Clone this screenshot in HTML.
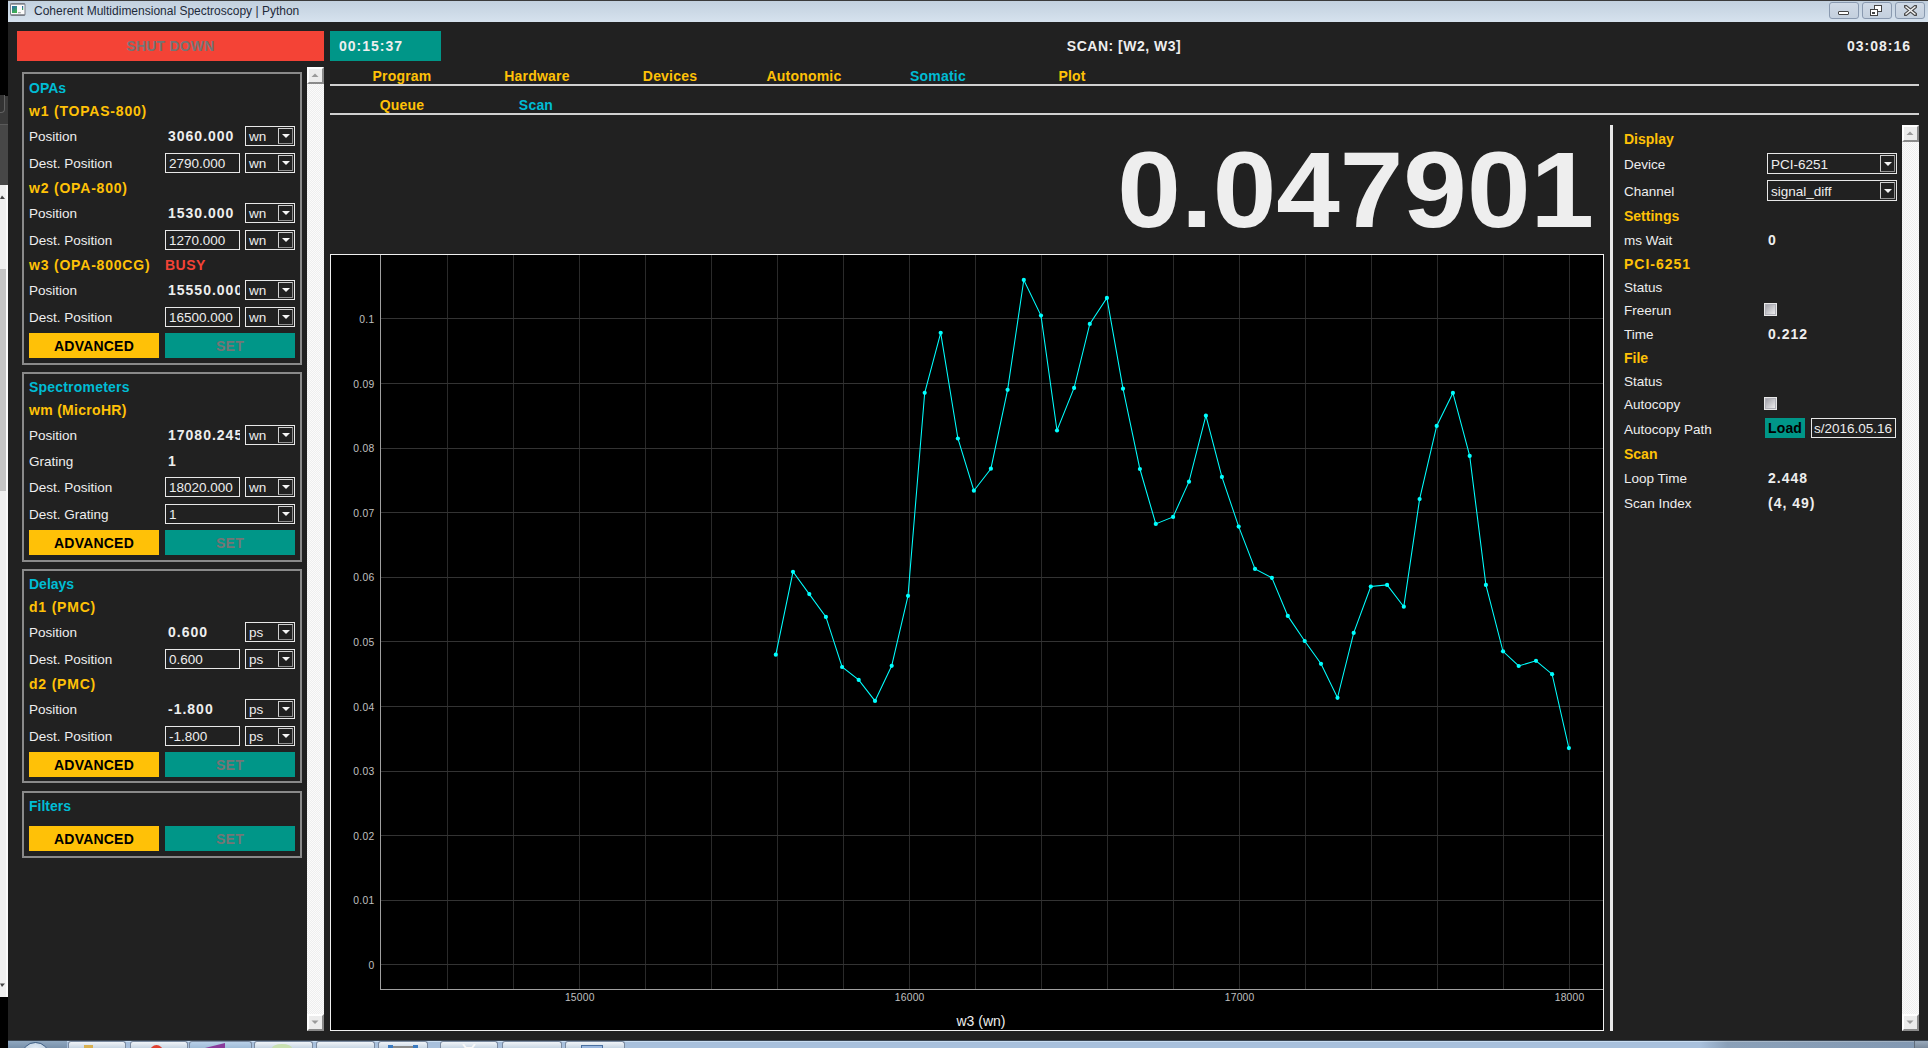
<!DOCTYPE html><html><head><meta charset="utf-8"><style>
html,body{margin:0;padding:0;}
body{width:1928px;height:1048px;position:relative;overflow:hidden;background:#212121;font-family:"Liberation Sans",sans-serif;}
.t{position:absolute;white-space:nowrap;}
.r{position:absolute;}
</style></head><body>
<div class="r" style="left:0px;top:0px;width:8px;height:1048px;background:#000;"></div>
<div class="r" style="left:0px;top:96px;width:8px;height:28px;background:#3a3a3a;"></div>
<div class="r" style="left:-10px;top:95px;width:15px;height:18px;border:1px solid #606060;border-top:none;border-radius:0 0 4px 0;box-sizing:border-box;background:#333;"></div>
<div class="r" style="left:0px;top:124px;width:8px;height:61px;background:#474747;border-top:1px solid #5a5a5a;box-sizing:border-box;"></div>
<div class="r" style="left:0px;top:185px;width:8px;height:812px;background:#f0f0f0;"></div>
<div class="r" style="left:0px;top:269px;width:6px;height:222px;background:#c4c4c4;"></div>
<div class="r" style="left:6px;top:185px;width:2px;height:812px;background:#fafafa;"></div>
<svg class="r" style="left:0px;top:195px" width="6" height="5"><path d="M0 4 L2 0.5 L5 4 Z" fill="#444"/></svg>
<svg class="r" style="left:0px;top:983px" width="6" height="5"><path d="M0 0.5 L2 4 L5 0.5 Z" fill="#444"/></svg>
<div class="r" style="left:8px;top:0px;width:1920px;height:1px;background:#3a3a3a;"></div>
<div class="r" style="left:8px;top:1px;width:1920px;height:21px;background:linear-gradient(#c2d0de,#d6e2ee);"></div>
<svg class="r" style="left:10px;top:3px" width="16" height="13"><defs><linearGradient id="ig" x1="0" y1="0" x2="0.4" y2="1"><stop offset="0" stop-color="#2a6ab0"/><stop offset="1" stop-color="#3fb050"/></linearGradient><linearGradient id="ig2" x1="0" y1="0" x2="0" y2="1"><stop offset="0" stop-color="#2a5ab0"/><stop offset="1" stop-color="#3fb050"/></linearGradient></defs><rect x="0.5" y="0.5" width="14.5" height="12" rx="1" fill="#fbfbfb" stroke="#7a7f88"/><rect x="0.5" y="0.5" width="14.5" height="1.2" fill="#7a7f88"/><rect x="1" y="11.2" width="14" height="1.3" fill="#7a7f88"/><rect x="2" y="3" width="5" height="7" fill="url(#ig)"/><rect x="12" y="3" width="1.2" height="4" fill="url(#ig2)"/><rect x="8" y="9" width="2.8" height="1.3" fill="#aaa"/></svg>
<div class="t" style="letter-spacing:0px;left:34px;top:2.0px;height:18px;line-height:18px;font-size:12px;color:#1e2a3a;">Coherent Multidimensional Spectroscopy | Python</div>
<div class="r" style="left:1829px;top:2px;width:30px;height:17px;border:1px solid #8a9ab0;border-radius:3px;box-sizing:border-box;background:linear-gradient(#d0dae6,#c4d0de);"></div>
<div class="r" style="left:1862px;top:2px;width:30px;height:17px;border:1px solid #8a9ab0;border-radius:3px;box-sizing:border-box;background:linear-gradient(#d0dae6,#c4d0de);"></div>
<div class="r" style="left:1895px;top:2px;width:30px;height:17px;border:1px solid #8a9ab0;border-radius:3px;box-sizing:border-box;background:linear-gradient(#d0dae6,#c4d0de);"></div>
<div class="r" style="left:1838px;top:11px;width:11px;height:4px;background:#fff;border:1px solid #444;box-sizing:border-box;border-radius:1px;"></div>
<svg class="r" style="left:1870px;top:5px" width="14" height="12"><rect x="4.5" y="0.5" width="7" height="6" fill="#fff" stroke="#444"/><rect x="0.5" y="4.5" width="7" height="6" fill="#fff" stroke="#444"/><rect x="2" y="7" width="3" height="2" fill="#444"/></svg>
<svg class="r" style="left:1904px;top:5px" width="13" height="11"><path d="M1.5 1.5 L11.5 9.5 M11.5 1.5 L1.5 9.5" stroke="#4a4a4a" stroke-width="3.6" stroke-linecap="square"/><path d="M1.5 1.5 L11.5 9.5 M11.5 1.5 L1.5 9.5" stroke="#f4f4f4" stroke-width="1.6"/></svg>
<div class="r" style="left:17px;top:31px;width:307px;height:30px;background:#f44336;"></div>
<div class="t" style="letter-spacing:0.2px;left:17.0px;width:307px;text-align:center;top:36.0px;height:20px;line-height:20px;font-size:14px;color:#757575;font-weight:bold;">SHUT DOWN</div>
<div class="r" style="left:330px;top:31px;width:111px;height:30px;background:#009688;"></div>
<div class="t" style="letter-spacing:1.0px;left:339px;top:36.0px;height:20px;line-height:20px;font-size:14px;color:#eeeeee;font-weight:bold;">00:15:37</div>
<div class="t" style="letter-spacing:0.5px;left:974.0px;width:300px;text-align:center;top:36.0px;height:20px;line-height:20px;font-size:14px;color:#eeeeee;font-weight:bold;">SCAN: [W2, W3]</div>
<div class="t" style="letter-spacing:1.0px;left:1791px;width:120px;text-align:right;top:36.0px;height:20px;line-height:20px;font-size:14px;color:#eeeeee;font-weight:bold;">03:08:16</div>
<div class="t" style="letter-spacing:0.2px;left:337.0px;width:130px;text-align:center;top:66.0px;height:20px;line-height:20px;font-size:14px;color:#ffc107;font-weight:bold;">Program</div>
<div class="t" style="letter-spacing:0.2px;left:472.0px;width:130px;text-align:center;top:66.0px;height:20px;line-height:20px;font-size:14px;color:#ffc107;font-weight:bold;">Hardware</div>
<div class="t" style="letter-spacing:0.2px;left:605.0px;width:130px;text-align:center;top:66.0px;height:20px;line-height:20px;font-size:14px;color:#ffc107;font-weight:bold;">Devices</div>
<div class="t" style="letter-spacing:0.2px;left:739.0px;width:130px;text-align:center;top:66.0px;height:20px;line-height:20px;font-size:14px;color:#ffc107;font-weight:bold;">Autonomic</div>
<div class="t" style="letter-spacing:0.2px;left:873.0px;width:130px;text-align:center;top:66.0px;height:20px;line-height:20px;font-size:14px;color:#00bcd4;font-weight:bold;">Somatic</div>
<div class="t" style="letter-spacing:0.2px;left:1007.0px;width:130px;text-align:center;top:66.0px;height:20px;line-height:20px;font-size:14px;color:#ffc107;font-weight:bold;">Plot</div>
<div class="r" style="left:330px;top:84px;width:1589px;height:2px;background:#d0d0d0;"></div>
<div class="t" style="letter-spacing:0.2px;left:337.0px;width:130px;text-align:center;top:95.0px;height:20px;line-height:20px;font-size:14px;color:#ffc107;font-weight:bold;">Queue</div>
<div class="t" style="letter-spacing:0.2px;left:471.0px;width:130px;text-align:center;top:95.0px;height:20px;line-height:20px;font-size:14px;color:#00bcd4;font-weight:bold;">Scan</div>
<div class="r" style="left:330px;top:113px;width:1589px;height:2px;background:#d0d0d0;"></div>
<div class="r" style="left:307px;top:67px;width:17px;height:963px;background:repeating-conic-gradient(#eeeeee 0 25%,#fbfbfb 0 50%) 0 0/2px 2px;"></div>
<div class="r" style="left:307px;top:67px;width:17px;height:17px;background:#ececec;border-right:2px solid #8a8a8a;border-bottom:2px solid #8a8a8a;border-left:2px solid #fff;border-top:2px solid #fff;box-sizing:border-box;"></div>
<svg class="r" style="left:311.0px;top:73.0px" width="8" height="5"><path d="M0.5 4 L4 0.5 L7.5 4 Z" fill="#9a9a9a"/></svg>
<div class="r" style="left:307px;top:1014px;width:17px;height:17px;background:#ececec;border-right:2px solid #8a8a8a;border-bottom:2px solid #8a8a8a;border-left:2px solid #fff;border-top:2px solid #fff;box-sizing:border-box;"></div>
<svg class="r" style="left:311.0px;top:1020.0px" width="8" height="5"><path d="M0.5 0.5 L4 4 L7.5 0.5 Z" fill="#9a9a9a"/></svg>
<div class="r" style="left:22px;top:72px;width:280px;height:293px;border:2px solid #8a8a8a;box-sizing:border-box;"></div>
<div class="t" style="letter-spacing:0px;left:29px;top:78.0px;height:20px;line-height:20px;font-size:14px;color:#00bcd4;font-weight:bold;">OPAs</div>
<div class="t" style="letter-spacing:0.8px;left:29px;top:101.0px;height:20px;line-height:20px;font-size:14px;color:#ffc107;font-weight:bold;">w1 (TOPAS-800)</div>
<div class="t" style="letter-spacing:0px;left:29px;top:127.0px;height:20px;line-height:20px;font-size:13.5px;color:#eeeeee;">Position</div>
<div class="t" style="left:168px;top:126px;height:20px;line-height:20px;width:72px;overflow:hidden;font-size:14px;font-weight:bold;letter-spacing:1px;color:#eeeeee">3060.000</div>
<div class="r" style="left:245px;top:126px;width:50px;height:20px;border:1px solid #e8e8e8;box-sizing:border-box;background:#212121;"></div>
<div class="t" style="letter-spacing:0px;left:249px;top:127.0px;height:20px;line-height:20px;font-size:13.5px;color:#eeeeee;">wn</div>
<div class="r" style="left:278px;top:128px;width:15px;height:16px;border:1px solid #d0d0d0;border-right-color:#909090;border-bottom-color:#909090;box-sizing:border-box;"></div>
<svg class="r" style="left:280.5px;top:133.0px" width="10" height="6"><path d="M1 1 L9 1 L5 5 Z" fill="#f4f4f4"/></svg>
<div class="t" style="letter-spacing:0px;left:29px;top:154.0px;height:20px;line-height:20px;font-size:13.5px;color:#eeeeee;">Dest. Position</div>
<div class="r" style="left:165px;top:153px;width:75px;height:20px;border:1px solid #e8e8e8;box-sizing:border-box;background:#212121;"></div>
<div class="t" style="letter-spacing:0px;left:169px;top:154.0px;height:20px;line-height:20px;font-size:13.5px;color:#eeeeee;">2790.000</div>
<div class="r" style="left:245px;top:153px;width:50px;height:20px;border:1px solid #e8e8e8;box-sizing:border-box;background:#212121;"></div>
<div class="t" style="letter-spacing:0px;left:249px;top:154.0px;height:20px;line-height:20px;font-size:13.5px;color:#eeeeee;">wn</div>
<div class="r" style="left:278px;top:155px;width:15px;height:16px;border:1px solid #d0d0d0;border-right-color:#909090;border-bottom-color:#909090;box-sizing:border-box;"></div>
<svg class="r" style="left:280.5px;top:160.0px" width="10" height="6"><path d="M1 1 L9 1 L5 5 Z" fill="#f4f4f4"/></svg>
<div class="t" style="letter-spacing:0.8px;left:29px;top:178.0px;height:20px;line-height:20px;font-size:14px;color:#ffc107;font-weight:bold;">w2 (OPA-800)</div>
<div class="t" style="letter-spacing:0px;left:29px;top:204.0px;height:20px;line-height:20px;font-size:13.5px;color:#eeeeee;">Position</div>
<div class="t" style="left:168px;top:203px;height:20px;line-height:20px;width:72px;overflow:hidden;font-size:14px;font-weight:bold;letter-spacing:1px;color:#eeeeee">1530.000</div>
<div class="r" style="left:245px;top:203px;width:50px;height:20px;border:1px solid #e8e8e8;box-sizing:border-box;background:#212121;"></div>
<div class="t" style="letter-spacing:0px;left:249px;top:204.0px;height:20px;line-height:20px;font-size:13.5px;color:#eeeeee;">wn</div>
<div class="r" style="left:278px;top:205px;width:15px;height:16px;border:1px solid #d0d0d0;border-right-color:#909090;border-bottom-color:#909090;box-sizing:border-box;"></div>
<svg class="r" style="left:280.5px;top:210.0px" width="10" height="6"><path d="M1 1 L9 1 L5 5 Z" fill="#f4f4f4"/></svg>
<div class="t" style="letter-spacing:0px;left:29px;top:231.0px;height:20px;line-height:20px;font-size:13.5px;color:#eeeeee;">Dest. Position</div>
<div class="r" style="left:165px;top:230px;width:75px;height:20px;border:1px solid #e8e8e8;box-sizing:border-box;background:#212121;"></div>
<div class="t" style="letter-spacing:0px;left:169px;top:231.0px;height:20px;line-height:20px;font-size:13.5px;color:#eeeeee;">1270.000</div>
<div class="r" style="left:245px;top:230px;width:50px;height:20px;border:1px solid #e8e8e8;box-sizing:border-box;background:#212121;"></div>
<div class="t" style="letter-spacing:0px;left:249px;top:231.0px;height:20px;line-height:20px;font-size:13.5px;color:#eeeeee;">wn</div>
<div class="r" style="left:278px;top:232px;width:15px;height:16px;border:1px solid #d0d0d0;border-right-color:#909090;border-bottom-color:#909090;box-sizing:border-box;"></div>
<svg class="r" style="left:280.5px;top:237.0px" width="10" height="6"><path d="M1 1 L9 1 L5 5 Z" fill="#f4f4f4"/></svg>
<div class="t" style="letter-spacing:0.8px;left:29px;top:255.0px;height:20px;line-height:20px;font-size:14px;color:#ffc107;font-weight:bold;">w3 (OPA-800CG)</div>
<div class="t" style="letter-spacing:0px;left:29px;top:281.0px;height:20px;line-height:20px;font-size:13.5px;color:#eeeeee;">Position</div>
<div class="t" style="left:168px;top:280px;height:20px;line-height:20px;width:72px;overflow:hidden;font-size:14px;font-weight:bold;letter-spacing:1px;color:#eeeeee">15550.000</div>
<div class="r" style="left:245px;top:280px;width:50px;height:20px;border:1px solid #e8e8e8;box-sizing:border-box;background:#212121;"></div>
<div class="t" style="letter-spacing:0px;left:249px;top:281.0px;height:20px;line-height:20px;font-size:13.5px;color:#eeeeee;">wn</div>
<div class="r" style="left:278px;top:282px;width:15px;height:16px;border:1px solid #d0d0d0;border-right-color:#909090;border-bottom-color:#909090;box-sizing:border-box;"></div>
<svg class="r" style="left:280.5px;top:287.0px" width="10" height="6"><path d="M1 1 L9 1 L5 5 Z" fill="#f4f4f4"/></svg>
<div class="t" style="letter-spacing:0px;left:29px;top:308.0px;height:20px;line-height:20px;font-size:13.5px;color:#eeeeee;">Dest. Position</div>
<div class="r" style="left:165px;top:307px;width:75px;height:20px;border:1px solid #e8e8e8;box-sizing:border-box;background:#212121;"></div>
<div class="t" style="letter-spacing:0px;left:169px;top:308.0px;height:20px;line-height:20px;font-size:13.5px;color:#eeeeee;">16500.000</div>
<div class="r" style="left:245px;top:307px;width:50px;height:20px;border:1px solid #e8e8e8;box-sizing:border-box;background:#212121;"></div>
<div class="t" style="letter-spacing:0px;left:249px;top:308.0px;height:20px;line-height:20px;font-size:13.5px;color:#eeeeee;">wn</div>
<div class="r" style="left:278px;top:309px;width:15px;height:16px;border:1px solid #d0d0d0;border-right-color:#909090;border-bottom-color:#909090;box-sizing:border-box;"></div>
<svg class="r" style="left:280.5px;top:314.0px" width="10" height="6"><path d="M1 1 L9 1 L5 5 Z" fill="#f4f4f4"/></svg>
<div class="t" style="letter-spacing:0.5px;left:165px;top:255.0px;height:20px;line-height:20px;font-size:14px;color:#f44336;font-weight:bold;">BUSY</div>
<div class="r" style="left:29px;top:333px;width:130px;height:25px;background:#ffc107;"></div>
<div class="t" style="letter-spacing:0.2px;left:29.0px;width:130px;text-align:center;top:335.5px;height:20px;line-height:20px;font-size:14px;color:#000;font-weight:bold;">ADVANCED</div>
<div class="r" style="left:165px;top:333px;width:130px;height:25px;background:#009688;"></div>
<div class="t" style="letter-spacing:0.2px;left:165.0px;width:130px;text-align:center;top:335.5px;height:20px;line-height:20px;font-size:14px;color:#757575;font-weight:bold;">SET</div>
<div class="r" style="left:22px;top:372px;width:280px;height:190px;border:2px solid #8a8a8a;box-sizing:border-box;"></div>
<div class="t" style="letter-spacing:0.2px;left:29px;top:377.0px;height:20px;line-height:20px;font-size:14px;color:#00bcd4;font-weight:bold;">Spectrometers</div>
<div class="t" style="letter-spacing:0.3px;left:29px;top:400.0px;height:20px;line-height:20px;font-size:14px;color:#ffc107;font-weight:bold;">wm (MicroHR)</div>
<div class="t" style="letter-spacing:0px;left:29px;top:426.0px;height:20px;line-height:20px;font-size:13.5px;color:#eeeeee;">Position</div>
<div class="t" style="left:168px;top:425px;height:20px;line-height:20px;width:72px;overflow:hidden;font-size:14px;font-weight:bold;letter-spacing:1px;color:#eeeeee">17080.245</div>
<div class="r" style="left:245px;top:425px;width:50px;height:20px;border:1px solid #e8e8e8;box-sizing:border-box;background:#212121;"></div>
<div class="t" style="letter-spacing:0px;left:249px;top:426.0px;height:20px;line-height:20px;font-size:13.5px;color:#eeeeee;">wn</div>
<div class="r" style="left:278px;top:427px;width:15px;height:16px;border:1px solid #d0d0d0;border-right-color:#909090;border-bottom-color:#909090;box-sizing:border-box;"></div>
<svg class="r" style="left:280.5px;top:432.0px" width="10" height="6"><path d="M1 1 L9 1 L5 5 Z" fill="#f4f4f4"/></svg>
<div class="t" style="letter-spacing:0px;left:29px;top:452.0px;height:20px;line-height:20px;font-size:13.5px;color:#eeeeee;">Grating</div>
<div class="t" style="letter-spacing:1.0px;left:168px;top:451.0px;height:20px;line-height:20px;font-size:14px;color:#eeeeee;font-weight:bold;">1</div>
<div class="t" style="letter-spacing:0px;left:29px;top:478.0px;height:20px;line-height:20px;font-size:13.5px;color:#eeeeee;">Dest. Position</div>
<div class="r" style="left:165px;top:477px;width:75px;height:20px;border:1px solid #e8e8e8;box-sizing:border-box;background:#212121;"></div>
<div class="t" style="letter-spacing:0px;left:169px;top:478.0px;height:20px;line-height:20px;font-size:13.5px;color:#eeeeee;">18020.000</div>
<div class="r" style="left:245px;top:477px;width:50px;height:20px;border:1px solid #e8e8e8;box-sizing:border-box;background:#212121;"></div>
<div class="t" style="letter-spacing:0px;left:249px;top:478.0px;height:20px;line-height:20px;font-size:13.5px;color:#eeeeee;">wn</div>
<div class="r" style="left:278px;top:479px;width:15px;height:16px;border:1px solid #d0d0d0;border-right-color:#909090;border-bottom-color:#909090;box-sizing:border-box;"></div>
<svg class="r" style="left:280.5px;top:484.0px" width="10" height="6"><path d="M1 1 L9 1 L5 5 Z" fill="#f4f4f4"/></svg>
<div class="t" style="letter-spacing:0px;left:29px;top:505.0px;height:20px;line-height:20px;font-size:13.5px;color:#eeeeee;">Dest. Grating</div>
<div class="r" style="left:165px;top:504px;width:130px;height:20px;border:1px solid #e8e8e8;box-sizing:border-box;background:#212121;"></div>
<div class="t" style="letter-spacing:0px;left:169px;top:505.0px;height:20px;line-height:20px;font-size:13.5px;color:#eeeeee;">1</div>
<div class="r" style="left:278px;top:506px;width:15px;height:16px;border:1px solid #d0d0d0;border-right-color:#909090;border-bottom-color:#909090;box-sizing:border-box;"></div>
<svg class="r" style="left:280.5px;top:511.0px" width="10" height="6"><path d="M1 1 L9 1 L5 5 Z" fill="#f4f4f4"/></svg>
<div class="r" style="left:29px;top:530px;width:130px;height:25px;background:#ffc107;"></div>
<div class="t" style="letter-spacing:0.2px;left:29.0px;width:130px;text-align:center;top:532.5px;height:20px;line-height:20px;font-size:14px;color:#000;font-weight:bold;">ADVANCED</div>
<div class="r" style="left:165px;top:530px;width:130px;height:25px;background:#009688;"></div>
<div class="t" style="letter-spacing:0.2px;left:165.0px;width:130px;text-align:center;top:532.5px;height:20px;line-height:20px;font-size:14px;color:#757575;font-weight:bold;">SET</div>
<div class="r" style="left:22px;top:569px;width:280px;height:214px;border:2px solid #8a8a8a;box-sizing:border-box;"></div>
<div class="t" style="letter-spacing:0px;left:29px;top:574.0px;height:20px;line-height:20px;font-size:14px;color:#00bcd4;font-weight:bold;">Delays</div>
<div class="t" style="letter-spacing:0.8px;left:29px;top:597.0px;height:20px;line-height:20px;font-size:14px;color:#ffc107;font-weight:bold;">d1 (PMC)</div>
<div class="t" style="letter-spacing:0px;left:29px;top:623.0px;height:20px;line-height:20px;font-size:13.5px;color:#eeeeee;">Position</div>
<div class="t" style="letter-spacing:1.0px;left:168px;top:622.0px;height:20px;line-height:20px;font-size:14px;color:#eeeeee;font-weight:bold;">0.600</div>
<div class="r" style="left:245px;top:622px;width:50px;height:20px;border:1px solid #e8e8e8;box-sizing:border-box;background:#212121;"></div>
<div class="t" style="letter-spacing:0px;left:249px;top:623.0px;height:20px;line-height:20px;font-size:13.5px;color:#eeeeee;">ps</div>
<div class="r" style="left:278px;top:624px;width:15px;height:16px;border:1px solid #d0d0d0;border-right-color:#909090;border-bottom-color:#909090;box-sizing:border-box;"></div>
<svg class="r" style="left:280.5px;top:629.0px" width="10" height="6"><path d="M1 1 L9 1 L5 5 Z" fill="#f4f4f4"/></svg>
<div class="t" style="letter-spacing:0px;left:29px;top:650.0px;height:20px;line-height:20px;font-size:13.5px;color:#eeeeee;">Dest. Position</div>
<div class="r" style="left:165px;top:649px;width:75px;height:20px;border:1px solid #e8e8e8;box-sizing:border-box;background:#212121;"></div>
<div class="t" style="letter-spacing:0px;left:169px;top:650.0px;height:20px;line-height:20px;font-size:13.5px;color:#eeeeee;">0.600</div>
<div class="r" style="left:245px;top:649px;width:50px;height:20px;border:1px solid #e8e8e8;box-sizing:border-box;background:#212121;"></div>
<div class="t" style="letter-spacing:0px;left:249px;top:650.0px;height:20px;line-height:20px;font-size:13.5px;color:#eeeeee;">ps</div>
<div class="r" style="left:278px;top:651px;width:15px;height:16px;border:1px solid #d0d0d0;border-right-color:#909090;border-bottom-color:#909090;box-sizing:border-box;"></div>
<svg class="r" style="left:280.5px;top:656.0px" width="10" height="6"><path d="M1 1 L9 1 L5 5 Z" fill="#f4f4f4"/></svg>
<div class="t" style="letter-spacing:0.8px;left:29px;top:674.0px;height:20px;line-height:20px;font-size:14px;color:#ffc107;font-weight:bold;">d2 (PMC)</div>
<div class="t" style="letter-spacing:0px;left:29px;top:700.0px;height:20px;line-height:20px;font-size:13.5px;color:#eeeeee;">Position</div>
<div class="t" style="letter-spacing:1.0px;left:168px;top:699.0px;height:20px;line-height:20px;font-size:14px;color:#eeeeee;font-weight:bold;">-1.800</div>
<div class="r" style="left:245px;top:699px;width:50px;height:20px;border:1px solid #e8e8e8;box-sizing:border-box;background:#212121;"></div>
<div class="t" style="letter-spacing:0px;left:249px;top:700.0px;height:20px;line-height:20px;font-size:13.5px;color:#eeeeee;">ps</div>
<div class="r" style="left:278px;top:701px;width:15px;height:16px;border:1px solid #d0d0d0;border-right-color:#909090;border-bottom-color:#909090;box-sizing:border-box;"></div>
<svg class="r" style="left:280.5px;top:706.0px" width="10" height="6"><path d="M1 1 L9 1 L5 5 Z" fill="#f4f4f4"/></svg>
<div class="t" style="letter-spacing:0px;left:29px;top:727.0px;height:20px;line-height:20px;font-size:13.5px;color:#eeeeee;">Dest. Position</div>
<div class="r" style="left:165px;top:726px;width:75px;height:20px;border:1px solid #e8e8e8;box-sizing:border-box;background:#212121;"></div>
<div class="t" style="letter-spacing:0px;left:169px;top:727.0px;height:20px;line-height:20px;font-size:13.5px;color:#eeeeee;">-1.800</div>
<div class="r" style="left:245px;top:726px;width:50px;height:20px;border:1px solid #e8e8e8;box-sizing:border-box;background:#212121;"></div>
<div class="t" style="letter-spacing:0px;left:249px;top:727.0px;height:20px;line-height:20px;font-size:13.5px;color:#eeeeee;">ps</div>
<div class="r" style="left:278px;top:728px;width:15px;height:16px;border:1px solid #d0d0d0;border-right-color:#909090;border-bottom-color:#909090;box-sizing:border-box;"></div>
<svg class="r" style="left:280.5px;top:733.0px" width="10" height="6"><path d="M1 1 L9 1 L5 5 Z" fill="#f4f4f4"/></svg>
<div class="r" style="left:29px;top:752px;width:130px;height:25px;background:#ffc107;"></div>
<div class="t" style="letter-spacing:0.2px;left:29.0px;width:130px;text-align:center;top:754.5px;height:20px;line-height:20px;font-size:14px;color:#000;font-weight:bold;">ADVANCED</div>
<div class="r" style="left:165px;top:752px;width:130px;height:25px;background:#009688;"></div>
<div class="t" style="letter-spacing:0.2px;left:165.0px;width:130px;text-align:center;top:754.5px;height:20px;line-height:20px;font-size:14px;color:#757575;font-weight:bold;">SET</div>
<div class="r" style="left:22px;top:791px;width:280px;height:67px;border:2px solid #8a8a8a;box-sizing:border-box;"></div>
<div class="t" style="letter-spacing:0px;left:29px;top:796.0px;height:20px;line-height:20px;font-size:14px;color:#00bcd4;font-weight:bold;">Filters</div>
<div class="r" style="left:29px;top:826px;width:130px;height:25px;background:#ffc107;"></div>
<div class="t" style="letter-spacing:0.2px;left:29.0px;width:130px;text-align:center;top:828.5px;height:20px;line-height:20px;font-size:14px;color:#000;font-weight:bold;">ADVANCED</div>
<div class="r" style="left:165px;top:826px;width:130px;height:25px;background:#009688;"></div>
<div class="t" style="letter-spacing:0.2px;left:165.0px;width:130px;text-align:center;top:828.5px;height:20px;line-height:20px;font-size:14px;color:#757575;font-weight:bold;">SET</div>
<div class="t" style="left:1094px;top:120px;width:500px;height:140px;line-height:140px;text-align:right;font-size:107px;font-weight:bold;color:#eeeeee;transform:scaleX(1.068);transform-origin:right center;">0.047901</div>
<div class="r" style="left:330px;top:254px;width:1274px;height:777px;background:#000;border:1px solid #f0f0f0;box-sizing:border-box;"></div>
<svg class="r" style="left:0;top:0" width="1928" height="1048"><line x1="447.5" y1="255" x2="447.5" y2="989" stroke="#2a2a2a" stroke-width="1"/><line x1="513.5" y1="255" x2="513.5" y2="989" stroke="#2a2a2a" stroke-width="1"/><line x1="579.5" y1="255" x2="579.5" y2="989" stroke="#2a2a2a" stroke-width="1"/><line x1="645.5" y1="255" x2="645.5" y2="989" stroke="#2a2a2a" stroke-width="1"/><line x1="711.5" y1="255" x2="711.5" y2="989" stroke="#2a2a2a" stroke-width="1"/><line x1="777.5" y1="255" x2="777.5" y2="989" stroke="#2a2a2a" stroke-width="1"/><line x1="843.5" y1="255" x2="843.5" y2="989" stroke="#2a2a2a" stroke-width="1"/><line x1="909.5" y1="255" x2="909.5" y2="989" stroke="#2a2a2a" stroke-width="1"/><line x1="975.5" y1="255" x2="975.5" y2="989" stroke="#2a2a2a" stroke-width="1"/><line x1="1041.5" y1="255" x2="1041.5" y2="989" stroke="#2a2a2a" stroke-width="1"/><line x1="1107.5" y1="255" x2="1107.5" y2="989" stroke="#2a2a2a" stroke-width="1"/><line x1="1173.5" y1="255" x2="1173.5" y2="989" stroke="#2a2a2a" stroke-width="1"/><line x1="1239.5" y1="255" x2="1239.5" y2="989" stroke="#2a2a2a" stroke-width="1"/><line x1="1305.5" y1="255" x2="1305.5" y2="989" stroke="#2a2a2a" stroke-width="1"/><line x1="1371.5" y1="255" x2="1371.5" y2="989" stroke="#2a2a2a" stroke-width="1"/><line x1="1437.5" y1="255" x2="1437.5" y2="989" stroke="#2a2a2a" stroke-width="1"/><line x1="1503.5" y1="255" x2="1503.5" y2="989" stroke="#2a2a2a" stroke-width="1"/><line x1="1569.5" y1="255" x2="1569.5" y2="989" stroke="#2a2a2a" stroke-width="1"/><line x1="381" y1="964.5" x2="1603" y2="964.5" stroke="#333333" stroke-width="1"/><line x1="381" y1="900.5" x2="1603" y2="900.5" stroke="#333333" stroke-width="1"/><line x1="381" y1="835.5" x2="1603" y2="835.5" stroke="#333333" stroke-width="1"/><line x1="381" y1="771.5" x2="1603" y2="771.5" stroke="#333333" stroke-width="1"/><line x1="381" y1="706.5" x2="1603" y2="706.5" stroke="#333333" stroke-width="1"/><line x1="381" y1="641.5" x2="1603" y2="641.5" stroke="#333333" stroke-width="1"/><line x1="381" y1="577.5" x2="1603" y2="577.5" stroke="#333333" stroke-width="1"/><line x1="381" y1="512.5" x2="1603" y2="512.5" stroke="#333333" stroke-width="1"/><line x1="381" y1="448.5" x2="1603" y2="448.5" stroke="#333333" stroke-width="1"/><line x1="381" y1="383.5" x2="1603" y2="383.5" stroke="#333333" stroke-width="1"/><line x1="381" y1="318.5" x2="1603" y2="318.5" stroke="#333333" stroke-width="1"/><line x1="380.5" y1="255" x2="380.5" y2="990" stroke="#a0a0a0" stroke-width="1"/><line x1="380" y1="989.5" x2="1603" y2="989.5" stroke="#a0a0a0" stroke-width="1"/><path d="M775.8 654.7 L793.0 571.8 L809.3 594.1 L825.9 616.9 L842.1 667.0 L858.7 679.9 L875.0 700.9 L891.7 665.8 L908.0 595.8 L924.7 392.8 L940.7 332.8 L957.9 438.5 L973.9 490.7 L990.9 468.7 L1007.6 389.8 L1023.8 279.9 L1041.0 315.6 L1057.0 430.5 L1074.1 387.9 L1089.8 323.9 L1106.9 297.9 L1123.0 388.7 L1139.9 469.0 L1155.8 523.9 L1173.1 516.9 L1189.0 481.7 L1205.9 415.7 L1221.9 476.9 L1238.7 526.6 L1255.0 568.9 L1271.9 577.8 L1287.8 615.9 L1304.7 641.0 L1321.0 663.8 L1337.5 697.8 L1353.7 632.9 L1370.8 586.6 L1387.1 584.9 L1403.8 606.7 L1419.6 499.1 L1436.7 425.9 L1452.9 392.9 L1469.7 455.9 L1485.9 584.9 L1503.0 651.3 L1518.7 666.0 L1536.0 660.8 L1552.1 674.2 L1568.9 748.1" fill="none" stroke="#00ffff" stroke-width="1.05"/><circle cx="775.8" cy="654.7" r="2.1" fill="#00ffff"/><circle cx="793.0" cy="571.8" r="2.1" fill="#00ffff"/><circle cx="809.3" cy="594.1" r="2.1" fill="#00ffff"/><circle cx="825.9" cy="616.9" r="2.1" fill="#00ffff"/><circle cx="842.1" cy="667.0" r="2.1" fill="#00ffff"/><circle cx="858.7" cy="679.9" r="2.1" fill="#00ffff"/><circle cx="875.0" cy="700.9" r="2.1" fill="#00ffff"/><circle cx="891.7" cy="665.8" r="2.1" fill="#00ffff"/><circle cx="908.0" cy="595.8" r="2.1" fill="#00ffff"/><circle cx="924.7" cy="392.8" r="2.1" fill="#00ffff"/><circle cx="940.7" cy="332.8" r="2.1" fill="#00ffff"/><circle cx="957.9" cy="438.5" r="2.1" fill="#00ffff"/><circle cx="973.9" cy="490.7" r="2.1" fill="#00ffff"/><circle cx="990.9" cy="468.7" r="2.1" fill="#00ffff"/><circle cx="1007.6" cy="389.8" r="2.1" fill="#00ffff"/><circle cx="1023.8" cy="279.9" r="2.1" fill="#00ffff"/><circle cx="1041.0" cy="315.6" r="2.1" fill="#00ffff"/><circle cx="1057.0" cy="430.5" r="2.1" fill="#00ffff"/><circle cx="1074.1" cy="387.9" r="2.1" fill="#00ffff"/><circle cx="1089.8" cy="323.9" r="2.1" fill="#00ffff"/><circle cx="1106.9" cy="297.9" r="2.1" fill="#00ffff"/><circle cx="1123.0" cy="388.7" r="2.1" fill="#00ffff"/><circle cx="1139.9" cy="469.0" r="2.1" fill="#00ffff"/><circle cx="1155.8" cy="523.9" r="2.1" fill="#00ffff"/><circle cx="1173.1" cy="516.9" r="2.1" fill="#00ffff"/><circle cx="1189.0" cy="481.7" r="2.1" fill="#00ffff"/><circle cx="1205.9" cy="415.7" r="2.1" fill="#00ffff"/><circle cx="1221.9" cy="476.9" r="2.1" fill="#00ffff"/><circle cx="1238.7" cy="526.6" r="2.1" fill="#00ffff"/><circle cx="1255.0" cy="568.9" r="2.1" fill="#00ffff"/><circle cx="1271.9" cy="577.8" r="2.1" fill="#00ffff"/><circle cx="1287.8" cy="615.9" r="2.1" fill="#00ffff"/><circle cx="1304.7" cy="641.0" r="2.1" fill="#00ffff"/><circle cx="1321.0" cy="663.8" r="2.1" fill="#00ffff"/><circle cx="1337.5" cy="697.8" r="2.1" fill="#00ffff"/><circle cx="1353.7" cy="632.9" r="2.1" fill="#00ffff"/><circle cx="1370.8" cy="586.6" r="2.1" fill="#00ffff"/><circle cx="1387.1" cy="584.9" r="2.1" fill="#00ffff"/><circle cx="1403.8" cy="606.7" r="2.1" fill="#00ffff"/><circle cx="1419.6" cy="499.1" r="2.1" fill="#00ffff"/><circle cx="1436.7" cy="425.9" r="2.1" fill="#00ffff"/><circle cx="1452.9" cy="392.9" r="2.1" fill="#00ffff"/><circle cx="1469.7" cy="455.9" r="2.1" fill="#00ffff"/><circle cx="1485.9" cy="584.9" r="2.1" fill="#00ffff"/><circle cx="1503.0" cy="651.3" r="2.1" fill="#00ffff"/><circle cx="1518.7" cy="666.0" r="2.1" fill="#00ffff"/><circle cx="1536.0" cy="660.8" r="2.1" fill="#00ffff"/><circle cx="1552.1" cy="674.2" r="2.1" fill="#00ffff"/><circle cx="1568.9" cy="748.1" r="2.1" fill="#00ffff"/></svg>
<div class="t" style="letter-spacing:0.3px;left:314.5px;width:60px;text-align:right;top:959.0px;height:14px;line-height:14px;font-size:10.3px;color:#c0c0c0;">0</div>
<div class="t" style="letter-spacing:0.3px;left:314.5px;width:60px;text-align:right;top:894.4px;height:14px;line-height:14px;font-size:10.3px;color:#c0c0c0;">0.01</div>
<div class="t" style="letter-spacing:0.3px;left:314.5px;width:60px;text-align:right;top:829.8px;height:14px;line-height:14px;font-size:10.3px;color:#c0c0c0;">0.02</div>
<div class="t" style="letter-spacing:0.3px;left:314.5px;width:60px;text-align:right;top:765.2px;height:14px;line-height:14px;font-size:10.3px;color:#c0c0c0;">0.03</div>
<div class="t" style="letter-spacing:0.3px;left:314.5px;width:60px;text-align:right;top:700.6px;height:14px;line-height:14px;font-size:10.3px;color:#c0c0c0;">0.04</div>
<div class="t" style="letter-spacing:0.3px;left:314.5px;width:60px;text-align:right;top:636.0px;height:14px;line-height:14px;font-size:10.3px;color:#c0c0c0;">0.05</div>
<div class="t" style="letter-spacing:0.3px;left:314.5px;width:60px;text-align:right;top:571.4000000000001px;height:14px;line-height:14px;font-size:10.3px;color:#c0c0c0;">0.06</div>
<div class="t" style="letter-spacing:0.3px;left:314.5px;width:60px;text-align:right;top:506.80000000000007px;height:14px;line-height:14px;font-size:10.3px;color:#c0c0c0;">0.07</div>
<div class="t" style="letter-spacing:0.3px;left:314.5px;width:60px;text-align:right;top:442.20000000000005px;height:14px;line-height:14px;font-size:10.3px;color:#c0c0c0;">0.08</div>
<div class="t" style="letter-spacing:0.3px;left:314.5px;width:60px;text-align:right;top:377.6px;height:14px;line-height:14px;font-size:10.3px;color:#c0c0c0;">0.09</div>
<div class="t" style="letter-spacing:0.3px;left:314.5px;width:60px;text-align:right;top:313.0px;height:14px;line-height:14px;font-size:10.3px;color:#c0c0c0;">0.1</div>
<div class="t" style="letter-spacing:0.2px;left:539.75px;width:80px;text-align:center;top:991.0px;height:14px;line-height:14px;font-size:10.3px;color:#c0c0c0;">15000</div>
<div class="t" style="letter-spacing:0.2px;left:869.7px;width:80px;text-align:center;top:991.0px;height:14px;line-height:14px;font-size:10.3px;color:#c0c0c0;">16000</div>
<div class="t" style="letter-spacing:0.2px;left:1199.65px;width:80px;text-align:center;top:991.0px;height:14px;line-height:14px;font-size:10.3px;color:#c0c0c0;">17000</div>
<div class="t" style="letter-spacing:0.2px;left:1529.6px;width:80px;text-align:center;top:991.0px;height:14px;line-height:14px;font-size:10.3px;color:#c0c0c0;">18000</div>
<div class="t" style="letter-spacing:0px;left:921.0px;width:120px;text-align:center;top:1012.0px;height:18px;line-height:18px;font-size:14px;color:#eeeeee;">w3 (wn)</div>
<div class="r" style="left:1610px;top:125px;width:3px;height:906px;background:#e8e8e8;"></div>
<div class="r" style="left:1902px;top:125px;width:17px;height:906px;background:repeating-conic-gradient(#eeeeee 0 25%,#fbfbfb 0 50%) 0 0/2px 2px;"></div>
<div class="r" style="left:1902px;top:125px;width:17px;height:17px;background:#ececec;border-right:2px solid #8a8a8a;border-bottom:2px solid #8a8a8a;border-left:2px solid #fff;border-top:2px solid #fff;box-sizing:border-box;"></div>
<svg class="r" style="left:1906.0px;top:131.0px" width="8" height="5"><path d="M0.5 4 L4 0.5 L7.5 4 Z" fill="#9a9a9a"/></svg>
<div class="r" style="left:1902px;top:1014px;width:17px;height:17px;background:#ececec;border-right:2px solid #8a8a8a;border-bottom:2px solid #8a8a8a;border-left:2px solid #fff;border-top:2px solid #fff;box-sizing:border-box;"></div>
<svg class="r" style="left:1906.0px;top:1020.0px" width="8" height="5"><path d="M0.5 0.5 L4 4 L7.5 0.5 Z" fill="#9a9a9a"/></svg>
<div class="t" style="letter-spacing:0px;left:1624px;top:129.0px;height:20px;line-height:20px;font-size:14px;color:#ffc107;font-weight:bold;">Display</div>
<div class="t" style="letter-spacing:0px;left:1624px;top:155.0px;height:20px;line-height:20px;font-size:13.5px;color:#eeeeee;">Device</div>
<div class="r" style="left:1767px;top:153px;width:130px;height:21px;border:1px solid #e8e8e8;box-sizing:border-box;background:#212121;"></div>
<div class="t" style="letter-spacing:0px;left:1771px;top:154.5px;height:20px;line-height:20px;font-size:13.5px;color:#eeeeee;">PCI-6251</div>
<div class="r" style="left:1880px;top:155px;width:15px;height:17px;border:1px solid #d0d0d0;border-right-color:#909090;border-bottom-color:#909090;box-sizing:border-box;"></div>
<svg class="r" style="left:1882.5px;top:160.5px" width="10" height="6"><path d="M1 1 L9 1 L5 5 Z" fill="#f4f4f4"/></svg>
<div class="t" style="letter-spacing:0px;left:1624px;top:182.0px;height:20px;line-height:20px;font-size:13.5px;color:#eeeeee;">Channel</div>
<div class="r" style="left:1767px;top:180px;width:130px;height:21px;border:1px solid #e8e8e8;box-sizing:border-box;background:#212121;"></div>
<div class="t" style="letter-spacing:0px;left:1771px;top:181.5px;height:20px;line-height:20px;font-size:13.5px;color:#eeeeee;">signal_diff</div>
<div class="r" style="left:1880px;top:182px;width:15px;height:17px;border:1px solid #d0d0d0;border-right-color:#909090;border-bottom-color:#909090;box-sizing:border-box;"></div>
<svg class="r" style="left:1882.5px;top:187.5px" width="10" height="6"><path d="M1 1 L9 1 L5 5 Z" fill="#f4f4f4"/></svg>
<div class="t" style="letter-spacing:0px;left:1624px;top:206.0px;height:20px;line-height:20px;font-size:14px;color:#ffc107;font-weight:bold;">Settings</div>
<div class="t" style="letter-spacing:0px;left:1624px;top:231.0px;height:20px;line-height:20px;font-size:13.5px;color:#eeeeee;">ms Wait</div>
<div class="t" style="letter-spacing:1.0px;left:1768px;top:230.0px;height:20px;line-height:20px;font-size:14px;color:#eeeeee;font-weight:bold;">0</div>
<div class="t" style="letter-spacing:1.0px;left:1624px;top:254.0px;height:20px;line-height:20px;font-size:14px;color:#ffc107;font-weight:bold;">PCI-6251</div>
<div class="t" style="letter-spacing:0px;left:1624px;top:278.0px;height:20px;line-height:20px;font-size:13.5px;color:#eeeeee;">Status</div>
<div class="t" style="letter-spacing:0px;left:1624px;top:301.0px;height:20px;line-height:20px;font-size:13.5px;color:#eeeeee;">Freerun</div>
<div class="r" style="left:1764px;top:303px;width:13px;height:13px;background:linear-gradient(135deg,#9a9aa2,#f4f4f4);border:1px solid #e8e8e8;box-shadow:inset 0 0 0 1px #b0b0b8;box-sizing:border-box;"></div>
<div class="t" style="letter-spacing:0px;left:1624px;top:325.0px;height:20px;line-height:20px;font-size:13.5px;color:#eeeeee;">Time</div>
<div class="t" style="letter-spacing:1.0px;left:1768px;top:324.0px;height:20px;line-height:20px;font-size:14px;color:#eeeeee;font-weight:bold;">0.212</div>
<div class="t" style="letter-spacing:0px;left:1624px;top:348.0px;height:20px;line-height:20px;font-size:14px;color:#ffc107;font-weight:bold;">File</div>
<div class="t" style="letter-spacing:0px;left:1624px;top:372.0px;height:20px;line-height:20px;font-size:13.5px;color:#eeeeee;">Status</div>
<div class="t" style="letter-spacing:0px;left:1624px;top:395.0px;height:20px;line-height:20px;font-size:13.5px;color:#eeeeee;">Autocopy</div>
<div class="r" style="left:1764px;top:397px;width:13px;height:13px;background:linear-gradient(135deg,#9a9aa2,#f4f4f4);border:1px solid #e8e8e8;box-shadow:inset 0 0 0 1px #b0b0b8;box-sizing:border-box;"></div>
<div class="t" style="letter-spacing:0px;left:1624px;top:420.0px;height:20px;line-height:20px;font-size:13.5px;color:#eeeeee;">Autocopy Path</div>
<div class="r" style="left:1765px;top:418px;width:40px;height:20px;background:#009688;"></div>
<div class="t" style="letter-spacing:0.2px;left:1765.0px;width:40px;text-align:center;top:418.0px;height:20px;line-height:20px;font-size:14px;color:#000;font-weight:bold;">Load</div>
<div class="r" style="left:1811px;top:418px;width:85px;height:20px;border:1px solid #e8e8e8;box-sizing:border-box;"></div>
<div class="r" style="left:1812px;top:419px;width:83px;height:18px;overflow:hidden;"><div class="t" style="right:3px;top:0px;height:20px;line-height:20px;font-size:13.5px;color:#eeeeee">s/2016.05.16</div></div>
<div class="t" style="letter-spacing:0px;left:1624px;top:444.0px;height:20px;line-height:20px;font-size:14px;color:#ffc107;font-weight:bold;">Scan</div>
<div class="t" style="letter-spacing:0px;left:1624px;top:469.0px;height:20px;line-height:20px;font-size:13.5px;color:#eeeeee;">Loop Time</div>
<div class="t" style="letter-spacing:1.0px;left:1768px;top:468.0px;height:20px;line-height:20px;font-size:14px;color:#eeeeee;font-weight:bold;">2.448</div>
<div class="t" style="letter-spacing:0px;left:1624px;top:494.0px;height:20px;line-height:20px;font-size:13.5px;color:#eeeeee;">Scan Index</div>
<div class="t" style="letter-spacing:1.0px;left:1768px;top:493.0px;height:20px;line-height:20px;font-size:14px;color:#eeeeee;font-weight:bold;">(4, 49)</div>
<div class="r" style="left:8px;top:1040px;width:1920px;height:1px;background:#3a4450;"></div>
<div class="r" style="left:8px;top:1041px;width:1920px;height:1px;background:#c8dcf0;"></div>
<div class="r" style="left:8px;top:1042px;width:1920px;height:6px;background:#a8c0dc;"></div>
<div class="r" style="left:1700px;top:1041px;width:228px;height:7px;background:linear-gradient(90deg,#a8c0dc,#8aa0b8 12%,#8298b2);"></div>
<div class="r" style="left:1700px;top:1041px;width:228px;height:1px;background:linear-gradient(90deg,#c8dcf0,#a8b8c8 12%,#a0b0c0);"></div>
<div class="r" style="left:8px;top:1041px;width:59px;height:7px;background:linear-gradient(#90a8c0,#7890aa);"></div>
<div class="r" style="left:21px;top:1042px;width:29px;height:29px;border-radius:50%;border:1px solid #3a5a80;box-sizing:border-box;background:radial-gradient(circle at 50% 30%,#e8f0f8,#9ab4cc);"></div>
<div class="r" style="left:68px;top:1041px;width:58px;height:7px;background:linear-gradient(#f0f4f8,#c8d6e4);border:1px solid #7a8aa0;border-bottom:none;border-radius:3px 3px 0 0;box-sizing:border-box;"></div>
<div class="r" style="left:130px;top:1041px;width:58px;height:7px;background:linear-gradient(#f0f4f8,#c8d6e4);border:1px solid #7a8aa0;border-bottom:none;border-radius:3px 3px 0 0;box-sizing:border-box;"></div>
<div class="r" style="left:189px;top:1041px;width:63px;height:7px;background:linear-gradient(#b8d0e8,#a0bcd8);border:1px solid #7a8aa0;border-bottom:none;border-radius:3px 3px 0 0;box-sizing:border-box;"></div>
<div class="r" style="left:254px;top:1041px;width:59px;height:7px;background:linear-gradient(#f0f4f8,#c8d6e4);border:1px solid #7a8aa0;border-bottom:none;border-radius:3px 3px 0 0;box-sizing:border-box;"></div>
<div class="r" style="left:316px;top:1041px;width:59px;height:7px;background:linear-gradient(#f0f4f8,#c8d6e4);border:1px solid #7a8aa0;border-bottom:none;border-radius:3px 3px 0 0;box-sizing:border-box;"></div>
<div class="r" style="left:378px;top:1041px;width:50px;height:7px;background:linear-gradient(#f0f4f8,#c8d6e4);border:1px solid #7a8aa0;border-bottom:none;border-radius:3px 3px 0 0;box-sizing:border-box;"></div>
<div class="r" style="left:440px;top:1041px;width:58px;height:7px;background:linear-gradient(#f0f4f8,#c8d6e4);border:1px solid #7a8aa0;border-bottom:none;border-radius:3px 3px 0 0;box-sizing:border-box;"></div>
<div class="r" style="left:502px;top:1041px;width:60px;height:7px;background:linear-gradient(#f0f4f8,#c8d6e4);border:1px solid #7a8aa0;border-bottom:none;border-radius:3px 3px 0 0;box-sizing:border-box;"></div>
<div class="r" style="left:565px;top:1041px;width:60px;height:7px;background:linear-gradient(#f0f4f8,#c8d6e4);border:1px solid #7a8aa0;border-bottom:none;border-radius:3px 3px 0 0;box-sizing:border-box;"></div>
<div class="r" style="left:84px;top:1045px;width:9px;height:3px;background:#d8b050;"></div>
<div class="r" style="left:150px;top:1045px;width:13px;height:13px;border-radius:50%;background:#e04030;"></div>
<svg class="r" style="left:205px;top:1043px" width="20" height="5"><path d="M0 5 L20 0 L20 5 Z" fill="#8a3a9a"/></svg>
<div class="r" style="left:272px;top:1044px;width:20px;height:8px;border-radius:50% 50% 0 0;background:#c8e0b0;"></div>
<div class="r" style="left:388px;top:1045px;width:5px;height:3px;background:#3a7ac0;"></div>
<div class="r" style="left:413px;top:1045px;width:5px;height:3px;background:#3a7ac0;"></div>
<div class="r" style="left:393px;top:1046px;width:20px;height:2px;background:#8a8a8a;"></div>
<svg class="r" style="left:462px;top:1044px" width="14" height="4"><path d="M1 0 L4 4 L10 4 L13 0" stroke="#f8f8f8" stroke-width="2" fill="none"/></svg>
<div class="r" style="left:581px;top:1045px;width:22px;height:3px;background:#9ab8e0;border:1px solid #4a70a0;border-bottom:none;box-sizing:border-box;"></div>
<div class="r" style="left:1914px;top:1041px;width:14px;height:7px;background:linear-gradient(#9aaabb,#7a8a9c);border-left:1px solid #606c7a;box-sizing:border-box;"></div>
</body></html>
